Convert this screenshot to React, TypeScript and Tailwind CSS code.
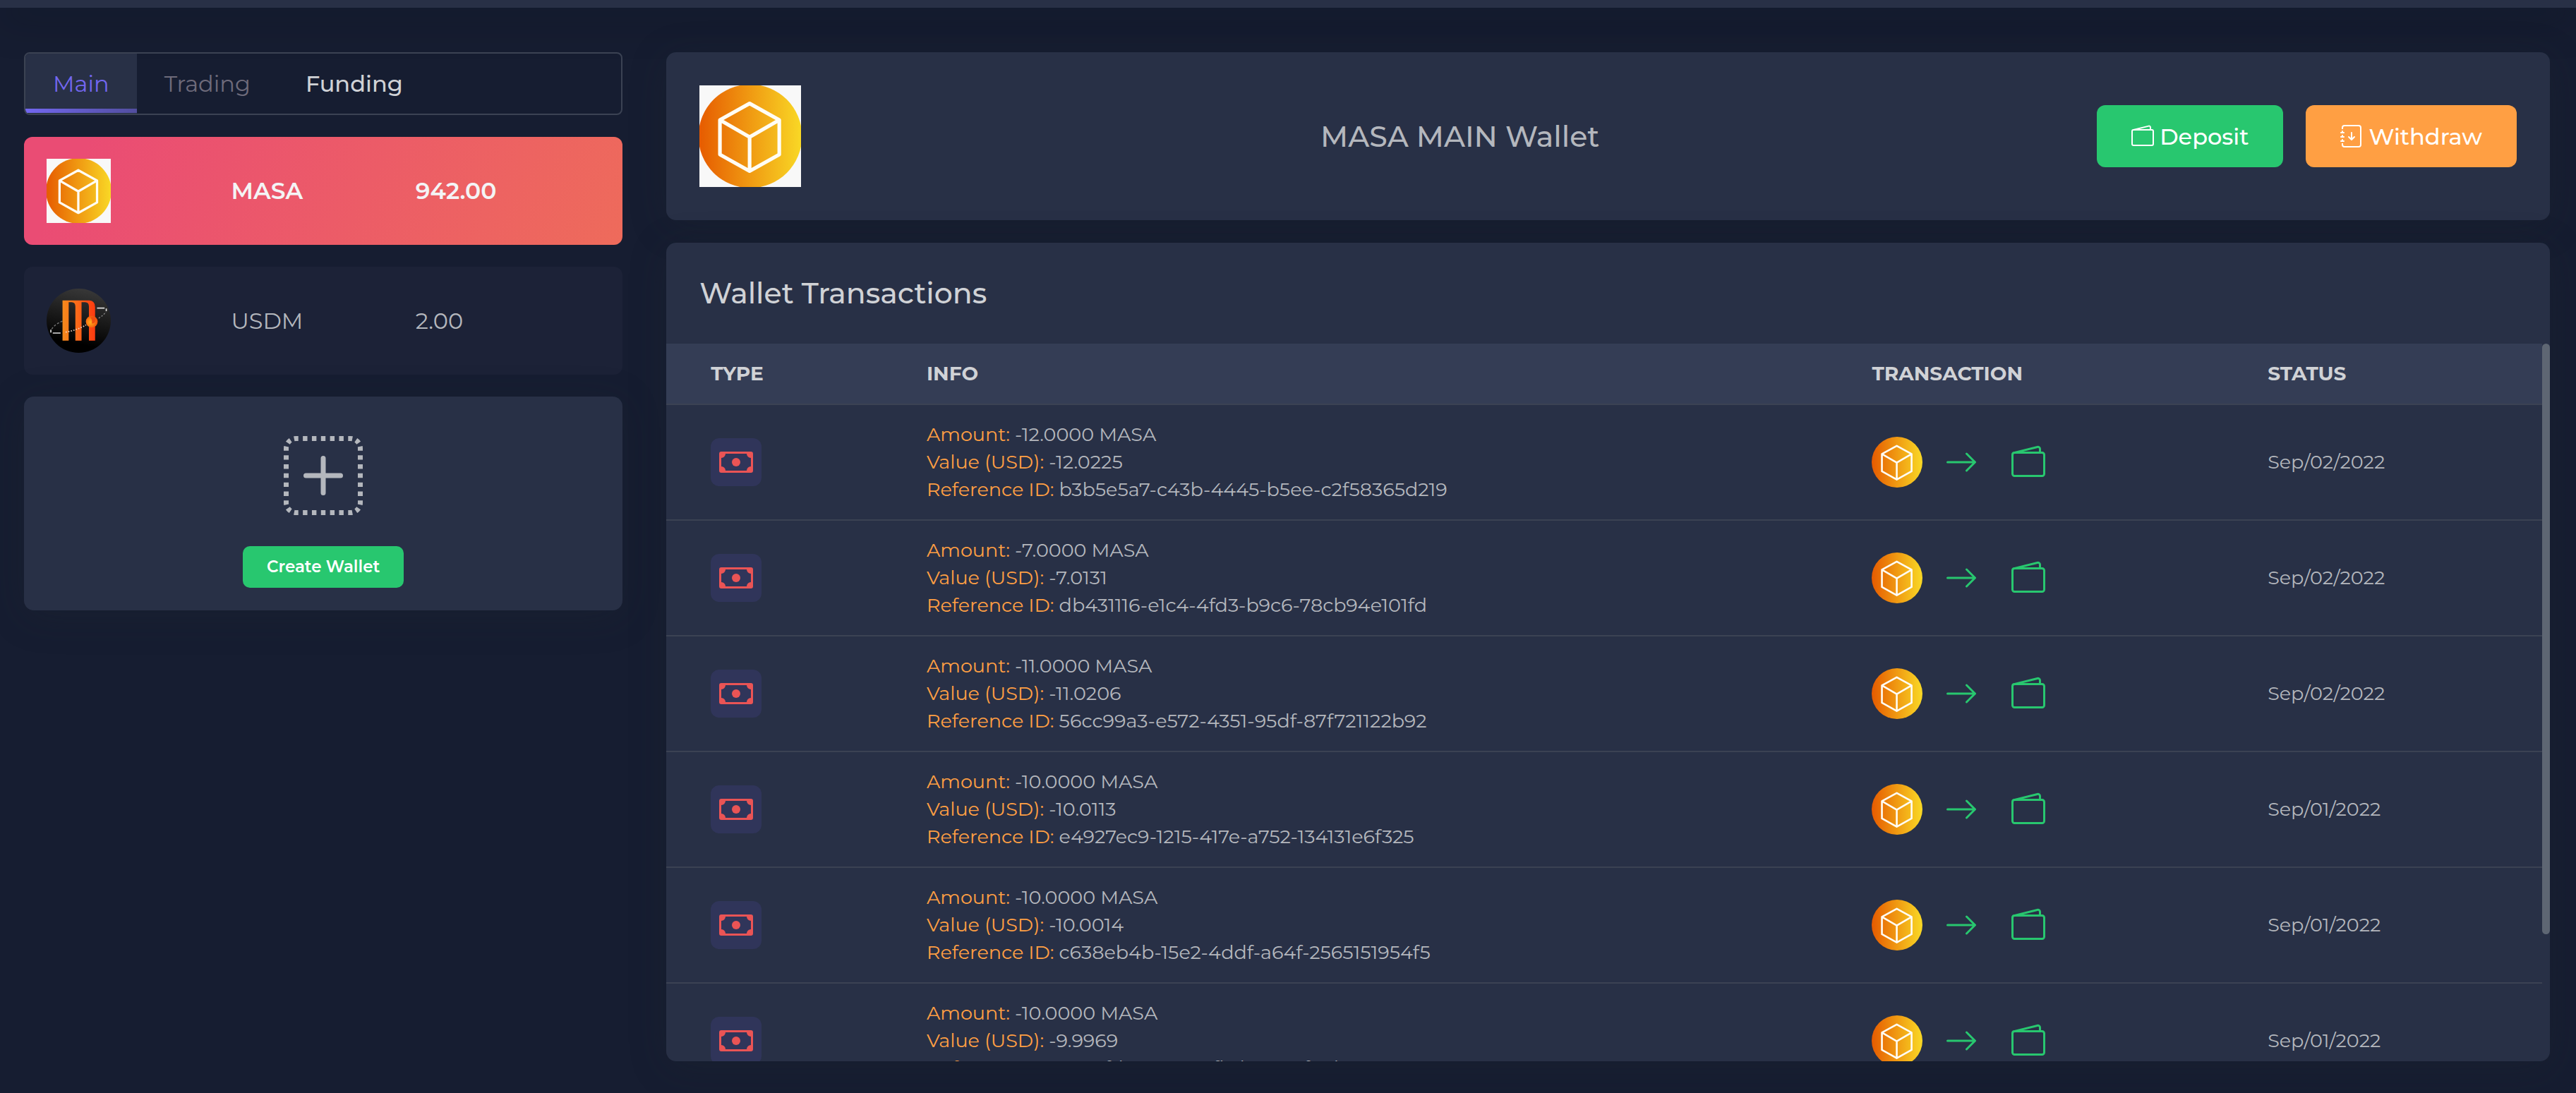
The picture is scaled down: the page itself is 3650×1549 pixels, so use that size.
import React, { useLayoutEffect, useRef, useState } from 'react';
import {
  BsArrowRight,
  BsCash,
  BsJournalArrowDown,
  BsPlusSquareDotted,
  BsWallet2,
} from 'react-icons/bs';

type Transaction = {
  amount: string;
  value: string;
  reference: string;
  date: string;
};

const transactions: Transaction[] = [
  { amount: '-12.0000 MASA', value: '-12.0225', reference: 'b3b5e5a7-c43b-4445-b5ee-c2f58365d219', date: 'Sep/02/2022' },
  { amount: '-7.0000 MASA', value: '-7.0131', reference: 'db431116-e1c4-4fd3-b9c6-78cb94e101fd', date: 'Sep/02/2022' },
  { amount: '-11.0000 MASA', value: '-11.0206', reference: '56cc99a3-e572-4351-95df-87f721122b92', date: 'Sep/02/2022' },
  { amount: '-10.0000 MASA', value: '-10.0113', reference: 'e4927ec9-1215-417e-a752-134131e6f325', date: 'Sep/01/2022' },
  { amount: '-10.0000 MASA', value: '-10.0014', reference: 'c638eb4b-15e2-4ddf-a64f-2565151954f5', date: 'Sep/01/2022' },
  { amount: '-10.0000 MASA', value: '-9.9969', reference: 'a730fd52-19c6-4fbd-9e27-f30b6a85c914', date: 'Sep/01/2022' },
  { amount: '-10.0000 MASA', value: '-9.9950', reference: '3c81e6a4-72d0-4b1e-8f35-0a9c47e2d618', date: 'Sep/01/2022' },
];

function MasaCoin({ id, round, className }: { id: string; round?: boolean; className: string }) {
  return (
    <svg viewBox="0 0 100 100" className={className} role="img" aria-label="MASA">
      <defs>
        <linearGradient id={id} x1="0" y1="0" x2="1" y2="0">
          <stop offset="0" stopColor="#e65a00" />
          <stop offset="0.5" stopColor="#f09a12" />
          <stop offset="1" stopColor="#f9d926" />
        </linearGradient>
      </defs>
      {!round && <rect width="100" height="100" fill="#f8f8f8" />}
      <circle cx="50" cy="50" r={round ? 50 : 51} fill={`url(#${id})`} />
      <path
        d="M49.4 17.8 78.6 34v34L49.4 84.3 20.2 68V34ZM20.2 34l29.2 16.8L78.6 34M49.4 50.8v33.5"
        fill="none"
        stroke="#fffdf5"
        strokeWidth="3.6"
        strokeLinejoin="round"
      />
    </svg>
  );
}

function UsdmCoin({ className }: { className: string }) {
  return (
    <svg viewBox="0 0 270 270" className={className} role="img" aria-label="USDM">
      <defs>
        <linearGradient id="usdm-bg" x1="0.6" y1="0" x2="0.4" y2="1">
          <stop offset="0" stopColor="#383838" />
          <stop offset="0.5" stopColor="#171717" />
          <stop offset="0.85" stopColor="#000000" />
        </linearGradient>
        <linearGradient id="usdm-bars" gradientUnits="userSpaceOnUse" x1="67" y1="0" x2="204" y2="0">
          <stop offset="0" stopColor="#f58a1c" />
          <stop offset="0.5" stopColor="#fb6518" />
          <stop offset="1" stopColor="#fb3a10" />
        </linearGradient>
        <radialGradient id="usdm-ball" cx="0.4" cy="0.55" r="0.6">
          <stop offset="0" stopColor="#ffb020" />
          <stop offset="0.55" stopColor="#f97a12" />
          <stop offset="1" stopColor="#ee4a0c" />
        </radialGradient>
      </defs>
      <circle cx="135" cy="135" r="135" fill="url(#usdm-bg)" />
      <path d="M67 137q-36 14-47 36" fill="none" stroke="#777" strokeWidth="4" strokeDasharray="9 7" />
      <path
        d="M67 50H180Q204 52 204 78V219H178V75Q178 57 162 57H147V219H121V75Q121 57 105 57H93V219H67Z"
        fill="url(#usdm-bars)"
      />
      <path d="M80 183q48-8 86-30" fill="none" stroke="#f3d3bd" strokeWidth="5" strokeDasharray="5 6" />
      <path d="M18 173v12M26 187h33M212 82h32M251 84v11" fill="none" stroke="#dedede" strokeWidth="5" />
      <path d="M219 124q20-11 30-26" fill="none" stroke="#888" strokeWidth="4" strokeDasharray="7 6" />
      <circle cx="190" cy="139" r="25" fill="url(#usdm-ball)" />
      <path d="M184 121q20-6 22 10-2 16-16 16 4-14-6-26Z" fill="#ee4d10" />
    </svg>
  );
}

function WalletTabs() {
  const tab = 'relative cursor-pointer px-[39px] py-5 text-[32px] leading-[45px]';
  return (
    <nav className="flex overflow-hidden rounded-lg border-2 border-[#3b4253]">
      <button
        type="button"
        className={`${tab} bg-[#283046] text-[#7367f0] after:absolute after:inset-x-0 after:bottom-px after:h-1.5 after:bg-linear-to-r after:from-[#7367f0] after:to-[#524e9f]`}
      >
        Main
      </button>
      <button type="button" className={`${tab} text-[#6e6b7b]`}>
        Trading
      </button>
      <button type="button" className={`${tab} font-medium text-[#d0d2d6]`}>
        Funding
      </button>
    </nav>
  );
}

function TransactionTable() {
  const scroller = useRef<HTMLDivElement>(null);
  const [thumb, setThumb] = useState({ top: 0, height: 0 });

  const update = () => {
    const el = scroller.current;
    if (!el) return;
    const ratio = el.clientHeight / el.scrollHeight;
    setThumb({ top: el.scrollTop * ratio, height: el.clientHeight * ratio });
  };

  useLayoutEffect(() => {
    update();
    window.addEventListener('resize', update);
    return () => window.removeEventListener('resize', update);
  }, []);

  const head = 'border-b-2 border-[#3b4253] bg-[#343d55] py-[22px] pl-[63px] text-left text-[28px] leading-[41px] font-bold text-[#d0d2d6]';
  const cell = 'border-b-2 border-[#3b4253] pt-[22px] pb-[23px] pl-[63px] align-middle';

  return (
    <div className="flex">
      <div
        ref={scroller}
        onScroll={update}
        className="max-h-[1017px] min-w-0 flex-1 overflow-y-auto [scrollbar-width:none]"
      >
        <table className="w-full table-fixed border-separate border-spacing-0 text-[27px] leading-[39px]">
          <thead>
            <tr>
              <th className={`${head} w-[11.5%]`}>TYPE</th>
              <th className={`${head} w-[50.4%]`}>INFO</th>
              <th className={`${head} w-[21.1%]`}>TRANSACTION</th>
              <th className={head}>STATUS</th>
            </tr>
          </thead>
          <tbody>
            {transactions.map((t, i) => (
              <tr key={t.reference}>
                <td className={cell}>
                  <div className="flex h-[68px] w-[72px] items-center justify-center rounded-xl bg-[#30355a] text-[#ea5455]">
                    <BsCash className="size-12" />
                  </div>
                </td>
                <td className={cell}>
                  <p>
                    <span className="text-[#ff9f43]">Amount:</span> {t.amount}
                  </p>
                  <p>
                    <span className="text-[#ff9f43]">Value (USD):</span> {t.value}
                  </p>
                  <p>
                    <span className="text-[#ff9f43]">Reference ID:</span> {t.reference}
                  </p>
                </td>
                <td className={cell}>
                  <div className="flex items-center text-[#28c76f]">
                    <MasaCoin id={`coin-${i}`} round className="size-[72px]" />
                    <BsArrowRight className="ml-[31px] size-12" />
                    <BsWallet2 className="ml-[47px] size-12" />
                  </div>
                </td>
                <td className={cell}>{t.date}</td>
              </tr>
            ))}
          </tbody>
        </table>
      </div>
      <div className="w-[11px]">
        <div
          className="rounded-full bg-[#5e6673]"
          style={{ height: thumb.height, marginTop: thumb.top }}
        />
      </div>
    </div>
  );
}

export default function App() {
  const card = 'rounded-[14px] bg-[#283046] shadow-[0_9px_53px_rgba(34,41,47,0.24)]';
  const wallet = 'grid cursor-pointer grid-cols-3 items-center rounded-xl px-8 py-[31px] text-left';
  const action = 'flex cursor-pointer items-center gap-2 rounded-xl px-[49px] py-7 text-[32px] leading-[31px] font-medium text-white';

  return (
    <div className="min-h-screen bg-[#161d31] font-['Montserrat','Inter',sans-serif] text-[#b4b7bd]">
      <header className="h-[11px] bg-[#283046] shadow-[0_9px_53px_rgba(10,14,24,0.6)]" />
      <main className="grid grid-cols-4 items-start gap-x-[62px] pt-[63px] pr-[37px] pb-[45px] pl-[34px]">
        <aside className="flex flex-col gap-[31px]">
          <WalletTabs />
          <button
            type="button"
            className={`${wallet} bg-linear-[118deg,#ea4c74_10%,#ee6b5b] text-[33px] font-semibold text-[#f4f4f5]`}
          >
            <MasaCoin id="coin-card" className="size-[91px]" />
            <span>MASA</span>
            <span>942.00</span>
          </button>
          <button type="button" className={`${wallet} bg-[#1c2237] text-[32px]`}>
            <UsdmCoin className="size-[91px]" />
            <span>USDM</span>
            <span>2.00</span>
          </button>
          <section className={`${card} flex flex-col items-center gap-11 pt-14 pb-8`}>
            <BsPlusSquareDotted className="size-28" />
            <button
              type="button"
              className="cursor-pointer rounded-[10px] bg-[#28c76f] px-[34px] py-[14px] text-[23px] leading-[31px] font-semibold text-white"
            >
              Create Wallet
            </button>
          </section>
        </aside>

        <div className="col-span-3 flex flex-col gap-8">
          <section className={`${card} flex items-center justify-between p-[47px]`}>
            <MasaCoin id="coin-header" className="size-36" />
            <h1 className="ml-[31px] text-[41px] leading-[49px] font-medium">MASA MAIN Wallet</h1>
            <div className="flex gap-8">
              <button type="button" className={`${action} bg-[#28c76f]`}>
                <BsWallet2 className="size-8" />
                Deposit
              </button>
              <button type="button" className={`${action} bg-[#ff9f43]`}>
                <BsJournalArrowDown className="size-8" />
                Withdraw
              </button>
            </div>
          </section>
          <section className={`${card} overflow-hidden`}>
            <h2 className="p-[47px] text-[41px] leading-[49px] font-medium text-[#d0d2d6]">
              Wallet Transactions
            </h2>
            <TransactionTable />
          </section>
        </div>
      </main>
    </div>
  );
}
